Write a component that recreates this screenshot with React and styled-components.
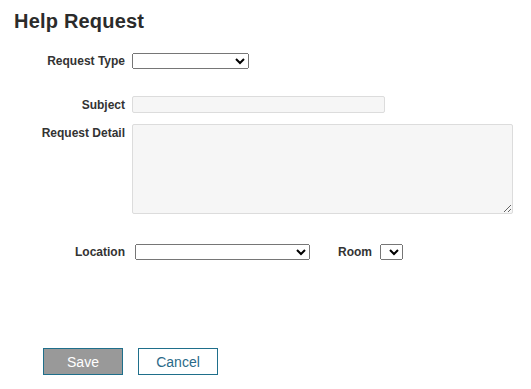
import React from 'react';
import styled, { createGlobalStyle } from 'styled-components';

const GlobalStyle = createGlobalStyle`
  body {
    margin: 0;
    background: #fff;
    font-family: "Liberation Sans", Arial, sans-serif;
    color: #333;
  }
`;

const Page = styled.div`
  padding: 10px 14px;
`;

const Title = styled.h1`
  margin: 0;
  font-size: 20px;
  line-height: 23px;
  font-weight: bold;
  color: #2b2b2b;
  letter-spacing: 0.2px;
`;

const Form = styled.form`
  display: flex;
  flex-direction: column;
  margin-top: 20px;
`;

const Row = styled.div`
  display: grid;
  grid-template-columns: 111px auto;
  column-gap: ${(p) => p.$gap || 7}px;
  align-items: ${(p) => (p.$top ? 'start' : 'center')};
  justify-content: start;
  margin-top: ${(p) => p.$mt || 0}px;
`;

const Label = styled.label`
  font-size: 12px;
  font-weight: bold;
  color: #333;
  text-align: right;
  line-height: 14px;
  padding-top: ${(p) => (p.$top ? 2 : 0)}px;
`;

const Select = styled.select`
  width: ${(p) => p.$w}px;
  height: 16px;
  font-size: 11px;
  font-family: "Liberation Sans", Arial, sans-serif;
  padding: 0;
  margin: 0;
  box-sizing: border-box;
`;

const TextInput = styled.input`
  width: 253px;
  height: 17px;
  box-sizing: border-box;
  border: 1px solid #dcdcdc;
  border-radius: 2px;
  background: #f6f6f6;
  margin: 0;
  padding: 0 4px;
  outline: none;
`;

const TextArea = styled.textarea`
  width: 381px;
  height: 90px;
  box-sizing: border-box;
  border: 1px solid #dcdcdc;
  border-radius: 2px;
  background: #f6f6f6;
  margin: 0;
  padding: 4px;
  outline: none;
  display: block;
`;

const Inline = styled.div`
  display: flex;
  align-items: center;
`;

const SideLabel = styled(Label)`
  margin-left: 28px;
  margin-right: 8px;
`;

const Buttons = styled.div`
  display: flex;
  gap: 15px;
  margin-top: 88px;
  padding-left: 29px;
`;

const Button = styled.button`
  width: 80px;
  height: 27px;
  box-sizing: border-box;
  border: 1px solid #1f6f8b;
  background: ${(p) => (p.$primary ? '#999999' : '#ffffff')};
  color: ${(p) => (p.$primary ? '#ffffff' : '#2a6a88')};
  font-family: "Liberation Sans", Arial, sans-serif;
  font-size: 14px;
  padding: 0;
  cursor: pointer;
`;

export default function App() {
  return (
    <Page>
      <GlobalStyle />
      <Title>Help Request</Title>
      <Form>
        <Row>
          <Label>Request Type</Label>
          <Select $w={117}>
            <option></option>
          </Select>
        </Row>
        <Row $mt={27}>
          <Label>Subject</Label>
          <TextInput type="text" />
        </Row>
        <Row $mt={11} $top>
          <Label $top>Request Detail</Label>
          <TextArea />
        </Row>
        <Row $mt={30} $gap={10}>
          <Label>Location</Label>
          <Inline>
            <Select $w={175}>
              <option></option>
            </Select>
            <SideLabel>Room</SideLabel>
            <Select $w={23}>
              <option></option>
            </Select>
          </Inline>
        </Row>
        <Buttons>
          <Button type="button" $primary>Save</Button>
          <Button type="button">Cancel</Button>
        </Buttons>
      </Form>
    </Page>
  );
}
